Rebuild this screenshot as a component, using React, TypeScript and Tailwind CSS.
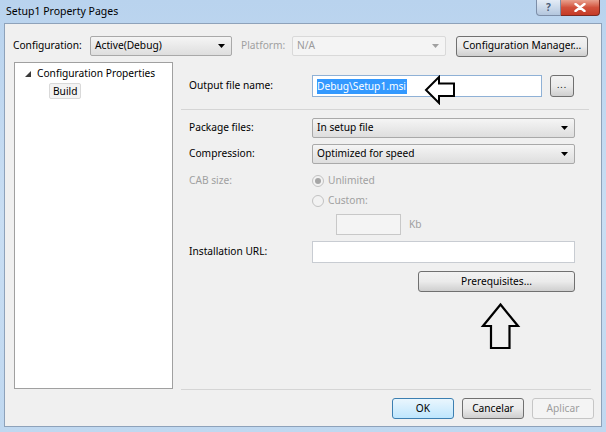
import React from 'react';

const font = { fontFamily: '"Noto Sans", "Open Sans", sans-serif' };

const Caret = ({ disabled = false }: { disabled?: boolean }) => (
  <svg width="7" height="4" viewBox="0 0 7 4" className="shrink-0">
    <path d="M0 0h7L3.5 4z" fill={disabled ? '#a0a0a0' : '#000'} />
  </svg>
);

const Combo = ({ value, width, disabled = false }: { value: string; width: string; disabled?: boolean }) => (
  <div
    className={`${width} h-[20px] flex items-center justify-between pl-[4px] pr-[6px] rounded-[2px] border ${
      disabled
        ? 'border-[#d9d9d9] bg-[#f4f4f4] text-[#9a9a9a]'
        : 'border-[#a9a9a9] bg-gradient-to-b from-[#f5f5f5] to-[#dedede] text-black'
    }`}
  >
    <span>{value}</span>
    <Caret disabled={disabled} />
  </div>
);

const Button = ({
  children,
  className = '',
  focused = false,
  disabled = false,
}: {
  children: React.ReactNode;
  className?: string;
  focused?: boolean;
  disabled?: boolean;
}) => (
  <div
    className={`h-[21px] flex items-center justify-center whitespace-nowrap rounded-[3px] border ${
      disabled
        ? 'border-[#c6c6c6] bg-[#f4f4f4] text-[#9d9d9d]'
        : focused
        ? 'border-[#3c7fb1] bg-gradient-to-b from-[#eaf6fd] to-[#bee6fd] text-black'
        : 'border-[#707070] bg-gradient-to-b from-[#f2f2f2] via-[#ebebeb] to-[#cfcfcf] text-black'
    } ${className}`}
  >
    {children}
  </div>
);

const Radio = ({ checked }: { checked?: boolean }) => (
  <div className="w-[12px] h-[12px] rounded-full border border-[#c2c2c2] bg-[#f2f2f2] flex items-center justify-center">
    {checked && <div className="w-[6px] h-[6px] rounded-full bg-[#a5a5a5]" />}
  </div>
);

export default function App() {
  return (
    <div
      style={font}
      className="relative w-[606px] h-[432px] overflow-hidden whitespace-nowrap bg-gradient-to-b from-[#b9d3ee] via-[#c9def3] to-[#c0d8f0] text-[10.2px] text-black flex flex-col"
    >
      {/* title bar */}
      <div className="h-[23px] flex items-start justify-between pl-[6px] pr-[6px]">
        <span className="mt-[4px] text-[10.5px]">Setup1 Property Pages</span>
        <div className="flex">
          <div className="w-[25px] h-[16px] rounded-bl-[4px] border border-t-0 border-[#7d8ea8] bg-gradient-to-b from-[#e4ecf6] to-[#b3c6de] flex items-center justify-center text-[#4a5c78] text-[10px] font-bold">
            ?
          </div>
          <div className="w-[39px] h-[16px] rounded-br-[4px] border border-t-0 border-l-0 border-[#7a2a22] bg-gradient-to-b from-[#e8a08e] via-[#d1513c] to-[#c63a26] flex items-center justify-center">
            <svg width="12" height="9" viewBox="0 0 12 9">
              <path d="M1.5 1l9 7M10.5 1l-9 7" stroke="#fff" strokeWidth="2.4" strokeLinecap="round" />
            </svg>
          </div>
        </div>
      </div>

      {/* client */}
      <div className="flex-1 mx-[4px] mb-[5px] border border-[#8ea2ba] bg-[#f0f0f0] flex flex-col">
        {/* configuration row */}
        <div className="mt-[12px] pl-[8px] h-[20px] flex items-center">
          <span className="w-[77px]">Configuration:</span>
          <Combo value="Active(Debug)" width="w-[142px]" />
          <span className="ml-[9px] w-[51px] text-[#a0a0a0]">Platform:</span>
          <Combo value="N/A" width="w-[154px]" disabled />
          <Button className="ml-[10px] w-[132px]">Configuration Manager...</Button>
        </div>

        {/* main */}
        <div className="mt-[6px] pl-[9px] flex">
          <div className="w-[159px] h-[327px] bg-white border border-[#a0a0a0] pt-[3px]">
            <div className="flex items-center h-[16px] pl-[10px]">
              <svg width="6" height="6" viewBox="0 0 6 6" className="mr-[6px]">
                <path d="M6 0v6H0z" fill="#3a3a3a" />
              </svg>
              <span>Configuration Properties</span>
            </div>
            <div className="pl-[34px] mt-[1px]">
              <span className="inline-block px-[3px] leading-[14px] rounded-[2px] border border-[#d9d9d9] bg-[#f3f3f3]">Build</span>
            </div>
          </div>

          <div className="ml-[8px] w-[410px] h-[328px] flex flex-col border-b border-[#d5d5d5]">
            <div className="mt-[13px] pl-[8px] h-[22px] flex items-center">
              <span className="w-[123px]">Output file name:</span>
              <div className="w-[230px] h-[22px] border border-[#8fb1d6] bg-white flex items-center pl-[4px]">
                <span className="bg-[#3399ff] text-white leading-[15px] pr-[1px]">Debug\Setup1.msi</span>
              </div>
              <Button className="ml-[8px] w-[24px] h-[22px] border-[#9a9a9a]">
                <span className="text-[9px] tracking-[1px] -mt-[2px]">...</span>
              </Button>
            </div>

            <div className="mt-[12px] border-t border-[#d5d5d5] w-[408px]" />

            <div className="mt-[8px] pl-[8px] h-[20px] flex items-center">
              <span className="w-[123px]">Package files:</span>
              <Combo value="In setup file" width="w-[263px]" />
            </div>
            <div className="mt-[6px] pl-[8px] h-[20px] flex items-center">
              <span className="w-[123px]">Compression:</span>
              <Combo value="Optimized for speed" width="w-[263px]" />
            </div>

            <div className="mt-[8px] pl-[8px] h-[18px] flex items-center text-[#a0a0a0]">
              <span className="w-[123px]">CAB size:</span>
              <Radio checked />
              <span className="ml-[4px]">Unlimited</span>
            </div>
            <div className="mt-[2px] pl-[131px] h-[18px] flex items-center text-[#a0a0a0]">
              <Radio />
              <span className="ml-[4px]">Custom:</span>
            </div>
            <div className="mt-[4px] pl-[155px] h-[21px] flex items-center text-[#a0a0a0]">
              <div className="w-[65px] h-[21px] border border-[#c8c8c8] bg-[#f4f4f4]" />
              <span className="ml-[8px]">Kb</span>
            </div>

            <div className="mt-[6px] pl-[8px] h-[22px] flex items-center">
              <span className="w-[123px]">Installation URL:</span>
              <div className="w-[263px] h-[22px] border border-[#c8ccd2] bg-white" />
            </div>

            <div className="mt-[8px] pl-[237px]">
              <Button className="w-[157px] h-[20px]">Prerequisites...</Button>
            </div>
          </div>
        </div>

        {/* bottom buttons */}
        <div className="mt-[8px] flex justify-end pr-[7px] gap-[8px]">
          <Button focused className="w-[62px]">OK</Button>
          <Button className="w-[62px]">Cancelar</Button>
          <Button disabled className="w-[62px]">Aplicar</Button>
        </div>
      </div>

      {/* annotation arrows */}
      <svg className="absolute left-[423px] top-[75px]" width="34" height="30" viewBox="423 75 34 30">
        <path d="M426 90 L439 77 L439 83.5 L454 83.5 L454 96 L439 96 L439 103 Z" fill="#fff" stroke="#000" strokeWidth="2" strokeLinejoin="miter" />
      </svg>
      <svg className="absolute left-[480px] top-[302px]" width="41" height="49" viewBox="480 302 41 49">
        <path d="M500.5 304.5 L518 326 L509.5 326 L509.5 348 L491 348 L491 326 L483 326 Z" fill="#f0f0f0" stroke="#000" strokeWidth="2.2" strokeLinejoin="miter" />
      </svg>
    </div>
  );
}
